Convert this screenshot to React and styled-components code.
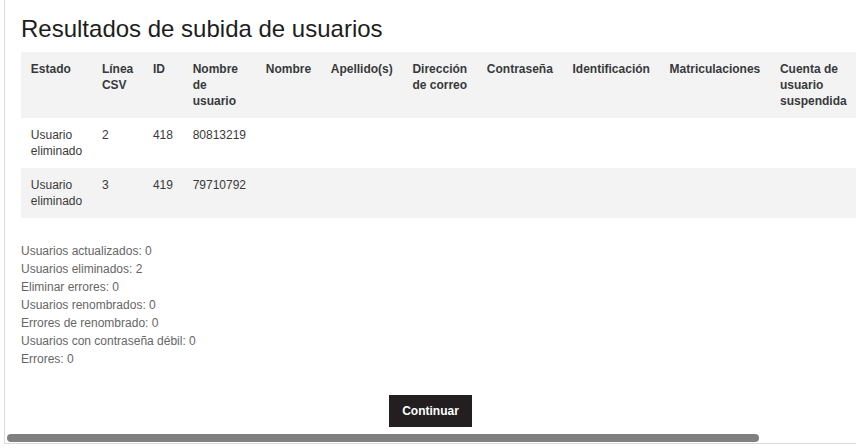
import React from "react";
import styled, { createGlobalStyle } from "styled-components";

const GlobalStyle = createGlobalStyle`
  html, body {
    margin: 0;
    padding: 0;
    background: #ffffff;
  }
  body {
    font-family: "Liberation Sans", Arial, sans-serif;
    overflow: hidden;
  }
`;

const Panel = styled.div`
  margin-left: 4px;
  width: 852px;
  box-sizing: border-box;
  border-left: 1px solid #dcdcdc;
  border-bottom: 1px solid #dcdcdc;
  overflow: hidden;
`;

const Content = styled.div`
  padding: 15px 16px 6px;
  overflow: hidden;
`;

// drawn horizontal scrollbar (the table is wider than the panel)
const ScrollTrack = styled.div`
  height: 10px;
  padding: 1px 2px;
  box-sizing: border-box;
`;

const ScrollThumb = styled.div`
  height: 8px;
  border-radius: 4px;
  background: #808080;
`;

const Title = styled.h2`
  margin: 0 0 8px;
  font-size: 24px;
  font-weight: 400;
  line-height: 1.2;
  color: #1d1d1d;
  white-space: nowrap;
`;

const Table = styled.table`
  width: 100%;
  border-collapse: collapse;
  font-size: 12px;
  line-height: 16px;
`;

const HeadCell = styled.th`
  text-align: left;
  vertical-align: top;
  padding: 9px 9.85px;
  font-weight: 700;
  color: #373a3c;
  background: #f3f3f3;
`;

const Row = styled.tr`
  background: ${(p) => (p.$striped ? "#f3f3f3" : "#ffffff")};
`;

const Cell = styled.td`
  vertical-align: top;
  padding: 9px 9.85px;
  color: #3a3a3a;
`;

const Summary = styled.div`
  margin-top: 24px;
  font-size: 12px;
  line-height: 18px;
  color: #666666;
`;

const Actions = styled.div`
  margin-top: 27px;
  text-align: center;
`;

const Button = styled.button`
  height: 32px;
  padding: 0 13px;
  border: 0;
  border-radius: 0;
  background: #231f20;
  color: #ffffff;
  font-family: "Liberation Sans", Arial, sans-serif;
  font-size: 12px;
  font-weight: 700;
  cursor: pointer;
  vertical-align: top;
`;

const columns = [
  "Estado",
  "Línea CSV",
  "ID",
  "Nombre de usuario",
  "Nombre",
  "Apellido(s)",
  "Dirección de correo",
  "Contraseña",
  "Identificación",
  "Matriculaciones",
  "Cuenta de usuario suspendida",
  "Eliminar",
];

const rows = [
  { status: "Usuario eliminado", line: "2", id: "418", username: "80813219" },
  { status: "Usuario eliminado", line: "3", id: "419", username: "79710792" },
];

const totals = [
  "Usuarios actualizados: 0",
  "Usuarios eliminados: 2",
  "Eliminar errores: 0",
  "Usuarios renombrados: 0",
  "Errores de renombrado: 0",
  "Usuarios con contraseña débil: 0",
  "Errores: 0",
];

export default function App() {
  return (
    <>
      <GlobalStyle />
      <Panel>
        <Content>
          <Title>Resultados de subida de usuarios</Title>
          <Table>
            <thead>
              <tr>
                {columns.map((c) => (
                  <HeadCell key={c}>{c}</HeadCell>
                ))}
              </tr>
            </thead>
            <tbody>
              {rows.map((r, i) => (
                <Row key={r.id} $striped={i % 2 === 1}>
                  <Cell>{r.status}</Cell>
                  <Cell>{r.line}</Cell>
                  <Cell>{r.id}</Cell>
                  <Cell>{r.username}</Cell>
                  {columns.slice(4).map((c) => (
                    <Cell key={c} />
                  ))}
                </Row>
              ))}
            </tbody>
          </Table>
          <Summary>
            {totals.map((t) => (
              <div key={t}>{t}</div>
            ))}
          </Summary>
          <Actions>
            <Button type="button">Continuar</Button>
          </Actions>
        </Content>
        <ScrollTrack>
          <ScrollThumb style={{ width: "88.8%" }} />
        </ScrollTrack>
      </Panel>
    </>
  );
}
